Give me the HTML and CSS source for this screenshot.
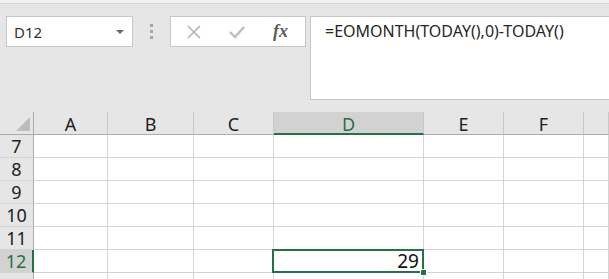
FILE: index.html
```html
<!DOCTYPE html>
<html lang="zh">
<head>
  <meta charset="UTF-8" />
  <title>EOMONTH</title>
  <link rel="stylesheet" href="styles.css">
</head>
<body>

  <div class="tope"></div>

  <!-- barra de formulas -->
  <div class="barra">
    <div class="nombre">
      <span>D12</span>
      <span class="flecha"></span>
    </div>
    <div class="puntos"><i></i><i></i><i></i></div>
    <div class="botones">
      <svg width="14" height="14" viewBox="0 0 14 14"><path d="M1 1 L13 13 M13 1 L1 13" stroke="#b4b4b4" stroke-width="1.6" fill="none"/></svg>
      <svg width="16" height="14" viewBox="0 0 16 14"><path d="M1 7 L6 12 L15 2" stroke="#bdbdbd" stroke-width="2.4" fill="none"/></svg>
      <span class="fx">fx</span>
    </div>
    <div class="formula">=EOMONTH(TODAY(),0)-TODAY()</div>
  </div>

  <!-- hoja -->
  <div class="hoja">
    <div class="esquina"><span class="tri"></span></div>
    <div class="col">A</div>
    <div class="col">B</div>
    <div class="col">C</div>
    <div class="col activa">D</div>
    <div class="col">E</div>
    <div class="col">F</div>
    <div class="col"></div>

    <div class="fila">7</div>
    <div class="celda"></div><div class="celda"></div><div class="celda"></div><div class="celda"></div><div class="celda"></div><div class="celda"></div><div class="celda"></div>

    <div class="fila">8</div>
    <div class="celda"></div><div class="celda"></div><div class="celda"></div><div class="celda"></div><div class="celda"></div><div class="celda"></div><div class="celda"></div>

    <div class="fila">9</div>
    <div class="celda"></div><div class="celda"></div><div class="celda"></div><div class="celda"></div><div class="celda"></div><div class="celda"></div><div class="celda"></div>

    <div class="fila">10</div>
    <div class="celda"></div><div class="celda"></div><div class="celda"></div><div class="celda"></div><div class="celda"></div><div class="celda"></div><div class="celda"></div>

    <div class="fila">11</div>
    <div class="celda"></div><div class="celda"></div><div class="celda"></div><div class="celda"></div><div class="celda"></div><div class="celda"></div><div class="celda"></div>

    <div class="fila activa">12</div>
    <div class="celda"></div><div class="celda"></div><div class="celda"></div><div class="celda sel">29<span class="asa"></span></div><div class="celda"></div><div class="celda"></div><div class="celda"></div>

    <div class="fila"></div>
    <div class="celda"></div><div class="celda"></div><div class="celda"></div><div class="celda"></div><div class="celda"></div><div class="celda"></div><div class="celda"></div>
  </div>

</body>
</html>
```

FILE: styles.css
```css
body {
  margin: 0;
  width: 609px;
  height: 279px;
  overflow: hidden;
  background-color: #e6e6e6;
  font-family: 'Noto Sans', sans-serif;
  color: #262626;
}

.tope {
  height: 3px;
  background-color: #f1f1f1;
  border-bottom: 1px solid #d6d6d6;
}

.barra {
  display: flex;
  align-items: flex-start;
  height: 108px;
  padding: 12px 0 0 6px;
  box-sizing: border-box;
}

.nombre {
  width: 127px;
  height: 31px;
  box-sizing: border-box;
  background-color: #fff;
  border: 1px solid #c6c6c6;
  display: flex;
  align-items: center;
  justify-content: space-between;
  padding: 0 8px 0 7px;
  font-size: 15px;
  color: #333;
}

.flecha {
  width: 0;
  height: 0;
  border-left: 4px solid transparent;
  border-right: 4px solid transparent;
  border-top: 4px solid #6a6a6a;
}

.puntos {
  width: 37px;
  height: 31px;
  display: flex;
  flex-direction: column;
  align-items: center;
  justify-content: center;
  gap: 3px;
}

.puntos i {
  width: 3px;
  height: 3px;
  background-color: #a6a6a6;
}

.botones {
  width: 136px;
  height: 31px;
  box-sizing: border-box;
  background-color: #fff;
  border: 1px solid #c6c6c6;
  display: flex;
  align-items: center;
  justify-content: space-between;
  padding: 0 17px 0 16px;
  margin-right: 4px;
}

.fx {
  font-family: 'Liberation Serif', serif;
  font-style: italic;
  font-weight: bold;
  font-size: 18px;
  color: #5c5c5c;
}

.formula {
  flex: 1;
  height: 84px;
  box-sizing: border-box;
  background-color: #fff;
  border: 1px solid #c6c6c6;
  border-right: none;
  padding: 3px 0 0 14px;
  font-size: 16px;
  color: #262626;
}

.hoja {
  display: grid;
  grid-template-columns: 34px 74px 86px 80px 150px 80px 80px 25px;
  grid-template-rows: repeat(8, 23px);
  background-color: #fff;
}

.esquina,
.col,
.fila {
  background-color: #e6e6e6;
  box-sizing: border-box;
  font-size: 18px;
  color: #222;
  display: flex;
  align-items: center;
  justify-content: center;
}

.esquina {
  border-right: 1px solid #ababab;
  border-bottom: 1px solid #ababab;
  position: relative;
}

.tri {
  position: absolute;
  right: 3px;
  bottom: 3px;
  width: 0;
  height: 0;
  border-left: 14px solid transparent;
  border-bottom: 14px solid #bdbdbd;
}

.col {
  border-right: 1px solid #c8c8c8;
  border-bottom: 1px solid #ababab;
  padding-top: 1px;
}

.col.activa {
  background-color: #d2d2d2;
  color: #217346;
  border-bottom: 2px solid #217346;
  padding-top: 2px;
}

.fila {
  border-right: 1px solid #ababab;
  border-bottom: 1px solid #d4d4d4;
}

.fila.activa {
  background-color: #d2d2d2;
  color: #217346;
  border-right: 2px solid #217346;
}

.celda {
  box-sizing: border-box;
  border-right: 1px solid #d4d4d4;
  border-bottom: 1px solid #d4d4d4;
}

.celda.sel {
  position: relative;
  text-align: right;
  font-size: 19px;
  line-height: 22px;
  padding-right: 4px;
  color: #111;
}

.celda.sel::before {
  content: "";
  position: absolute;
  left: -2px;
  top: -1px;
  right: -1px;
  bottom: -1px;
  border: 2px solid #217346;
}

.asa {
  position: absolute;
  right: -4px;
  bottom: -4px;
  width: 5px;
  height: 5px;
  background-color: #217346;
  border: 1px solid #fff;
}
```
